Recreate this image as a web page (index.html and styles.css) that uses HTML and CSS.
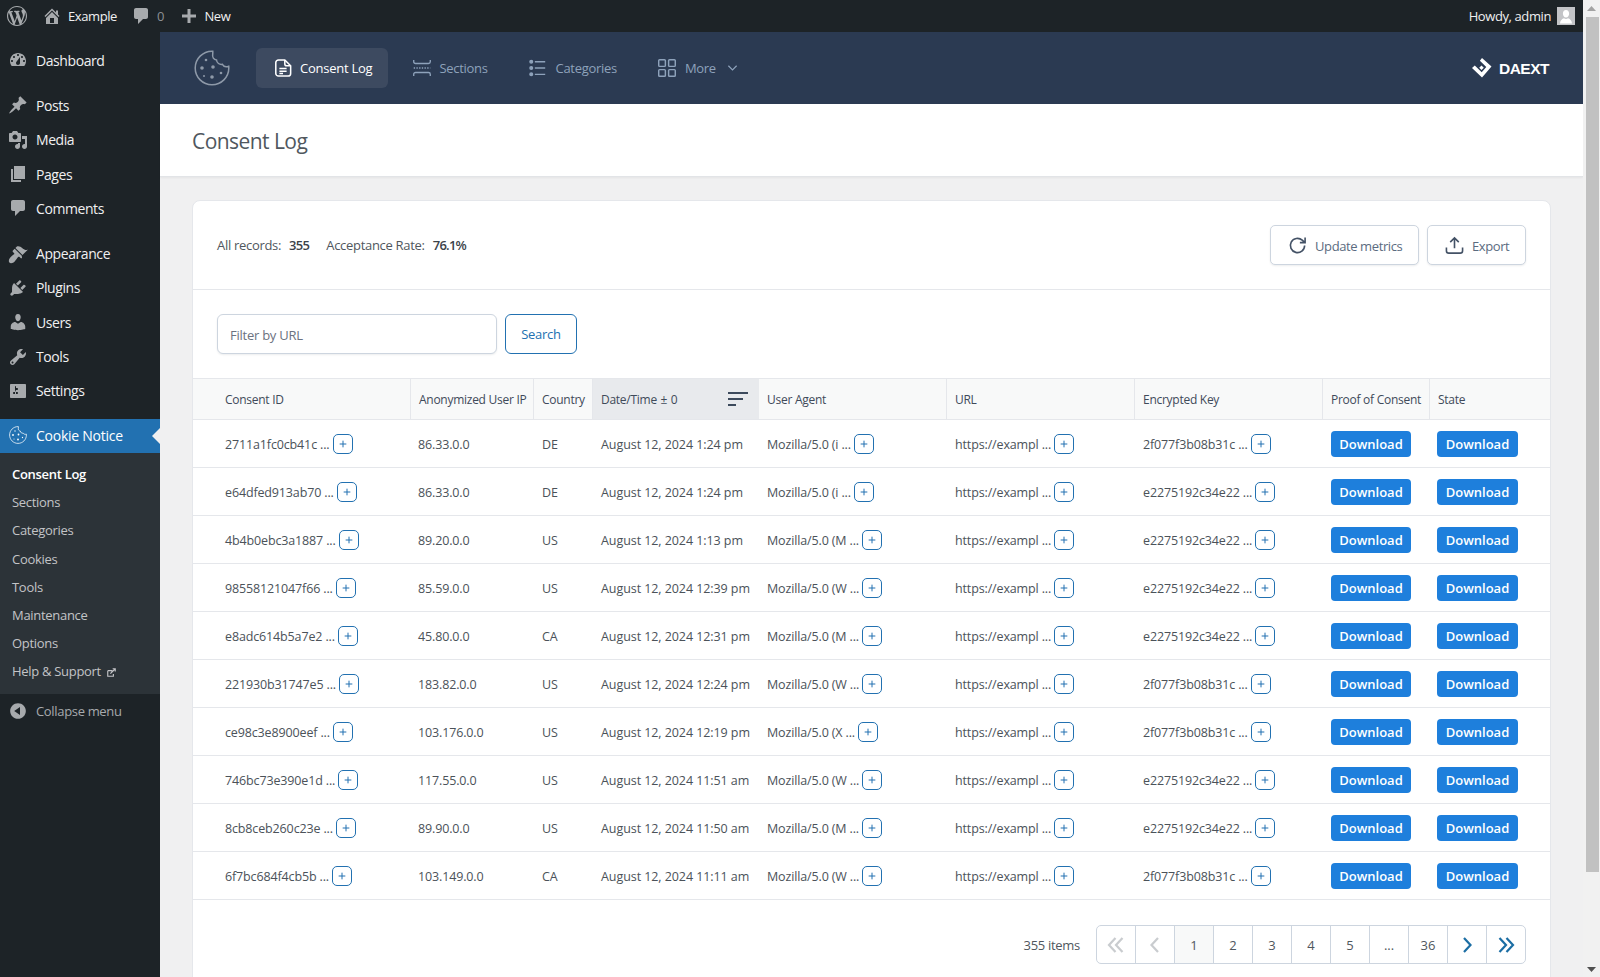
FILE: index.html
```html
<!DOCTYPE html>
<html lang="en">
<head>
<meta charset="utf-8">
<title>Consent Log</title>
<link rel="stylesheet" href="styles.css">
</head>
<body>
<svg class="defs" width="0" height="0" aria-hidden="true">
  <symbol id="i-cookie" viewBox="0 0 36 36"><path d="M18 1.200C8.700 1.200 1.200 8.700 1.200 18S8.700 34.800 18 34.800 34.800 27.300 34.800 18c0-.7 0-1.200-.1-1.800-2.400 1-5.100.3-6.300-1.900-2.900.6-5.600-1.300-5.900-4.300-2.700-.300-4.500-2.900-3.800-5.500.1-1.200.2-2.200.1-3.300z" fill="none" stroke="currentColor" stroke-width="1.500"/><circle cx="12" cy="10" r="1.300" fill="currentColor"/><circle cx="19" cy="17" r="1.800" fill="currentColor"/><circle cx="8" cy="18" r="1.800" fill="currentColor"/><circle cx="18" cy="27" r="1.800" fill="currentColor"/><circle cx="27" cy="23" r="1.300" fill="currentColor"/><circle cx="10" cy="26" r="1" fill="currentColor"/></symbol>
  <symbol id="i-plus" viewBox="0 0 18 18"><path d="M9 4v10M4 9h10" fill="none" stroke="currentColor" stroke-width="1.500"/></symbol>
  <symbol id="i-first" viewBox="0 0 20 20"><path d="M9.500 3 3 10l6.500 7M16.500 3 10 10l6.500 7" fill="none" stroke="currentColor" stroke-width="2.200"/></symbol>
  <symbol id="i-prev" viewBox="0 0 20 20"><path d="M13 3 6.500 10l6.500 7" fill="none" stroke="currentColor" stroke-width="2.200"/></symbol>
  <symbol id="i-next" viewBox="0 0 20 20"><path d="M7 3l6.500 7L7 17" fill="none" stroke="currentColor" stroke-width="2.200"/></symbol>
  <symbol id="i-last" viewBox="0 0 20 20"><path d="M3.500 3 10 10l-6.500 7M10.500 3 17 10l-6.500 7" fill="none" stroke="currentColor" stroke-width="2.200"/></symbol>
</svg>

<header class="adminbar">
  <div class="bar-group">
    <svg class="bar-wp" viewBox="0 0 20 20"><path fill-rule="evenodd" d="M20 10c0-5.510-4.490-10-10-10C4.480 0 0 4.490 0 10c0 5.520 4.480 10 10 10 5.510 0 10-4.480 10-10zM7.780 15.370L4.370 6.220c.55-.02 1.170-.08 1.170-.08.5-.06.44-1.130-.06-1.110 0 0-1.450.11-2.370.11-.18 0-.37 0-.58-.01C4.120 2.690 6.870 1.110 10 1.110c2.330 0 4.450.87 6.050 2.340-.68-.11-1.650.39-1.650 1.580 0 .74.45 1.360.9 2.100.35.61.55 1.360.55 2.460 0 1.490-1.400 5-1.400 5l-3.030-8.370c.54-.02.82-.17.82-.17.5-.05.44-1.250-.06-1.220 0 0-1.440.12-2.380.12-.87 0-2.330-.12-2.330-.12-.5-.03-.56 1.200-.06 1.220l.92.08 1.260 3.410zM17.410 10c.24-.64.74-1.870.43-4.250.7 1.290 1.050 2.710 1.050 4.250 0 3.290-1.730 6.240-4.400 7.780.97-2.590 1.940-5.200 2.920-7.780zM6.100 18.090C3.120 16.650 1.110 13.530 1.110 10c0-1.300.23-2.480.72-3.590C3.250 10.300 4.670 14.200 6.100 18.090zm4.030-6.630l2.580 6.980c-.86.29-1.760.45-2.710.45-.79 0-1.570-.11-2.290-.33.81-2.380 1.620-4.740 2.420-7.100z"/></svg>
    <svg class="bar-home" viewBox="0 0 20 20"><path d="M16 8.500l1.530 1.530-1.060 1.060L10 4.620l-6.470 6.470-1.060-1.060L10 2.500l4 4v-2h2v4zm-6-2.460l6 5.990V18H4v-5.970zM12 17v-5H8v5h4z"/></svg>
    <span class="bar-text bar-site">Example</span>
    <svg class="bar-comment" viewBox="0 0 20 20"><path d="M5 2h10c1.100 0 2 .9 2 2v7c0 1.100-.9 2-2 2h-3l-5 5v-5H5c-1.100 0-2-.9-2-2V4c0-1.100.9-2 2-2z"/></svg>
    <span class="bar-count">0</span>
    <svg class="bar-plus" viewBox="0 0 20 20"><path d="M17 8.500v3h-5.500V17h-3v-5.500H3v-3h5.500V3h3v5.500z"/></svg>
    <span class="bar-text">New</span>
  </div>
  <div class="bar-group">
    <span class="bar-text">Howdy, admin</span>
    <svg class="bar-avatar" viewBox="0 0 18 18"><rect width="18" height="18" fill="#c3c4c7"/><path fill="#fff" d="M9 3c2 0 3.100 1.600 3.100 3.500S11 10.500 9 10.500 5.900 8.400 5.900 6.500 7 3 9 3zM3 16.500c0-3 2.300-5 4-5.300.6.500 1.300.8 2 .8s1.400-.3 2-.8c1.700.3 4 2.300 4 5.300z"/></svg>
  </div>
</header>

<div class="frame">
  <nav class="sidebar">
    <ul class="menu">
      <li class="menu-item"><svg class="mi" viewBox="0 0 20 20"><path fill-rule="evenodd" d="M3.760 16h12.480c1.100-1.370 1.760-3.110 1.760-5 0-4.420-3.580-8-8-8s-8 3.580-8 8c0 1.890.66 3.630 1.760 5zM10 4c.55 0 1 .45 1 1s-.45 1-1 1-1-.45-1-1 .45-1 1-1zM6 6c.55 0 1 .45 1 1s-.45 1-1 1-1-.45-1-1 .45-1 1-1zm8 0c.55 0 1 .45 1 1s-.45 1-1 1-1-.45-1-1 .45-1 1-1zm-5.370 5.550L12 7v6c0 1.100-.9 2-2 2s-2-.9-2-2c0-.57.24-1.080.63-1.450zM4 10c.55 0 1 .45 1 1s-.45 1-1 1-1-.45-1-1 .45-1 1-1zm12 0c.55 0 1 .45 1 1s-.45 1-1 1-1-.45-1-1 .45-1 1-1z"/></svg>Dashboard</li>
      <li class="menu-sep"></li>
      <li class="menu-item"><svg class="mi" viewBox="0 0 20 20"><path d="M10.440 3.020l1.820-1.820 6.360 6.350-1.830 1.820c-1.050-.68-2.480-.57-3.410.36l-.75.75c-.92.93-1.040 2.350-.35 3.410l-1.830 1.820-2.410-2.410-2.800 2.790c-.42.42-3.380 2.710-3.800 2.290s1.860-3.390 2.280-3.810l2.790-2.790L4.100 9.360l1.830-1.820c1.050.69 2.480.57 3.400-.36l.75-.75c.93-.92 1.050-2.350.36-3.410z"/></svg>Posts</li>
      <li class="menu-item"><svg class="mi" viewBox="0 0 20 20"><path fill-rule="evenodd" d="M13 11V4c0-.55-.45-1-1-1h-1.670L9 1H5L3.670 3H2c-.55 0-1 .45-1 1v7c0 .55.45 1 1 1h10c.55 0 1-.45 1-1zM7 4.500c1.380 0 2.500 1.120 2.500 2.500S8.380 9.500 7 9.500 4.500 8.380 4.500 7 5.620 4.500 7 4.500zM14 6h5v10.500c0 1.380-1.120 2.500-2.500 2.500S14 17.880 14 16.500s1.120-2.500 2.500-2.500c.17 0 .34.02.5.05V9h-3V6zm-4 8.050V13h2v3.500c0 1.380-1.120 2.500-2.500 2.500S7 17.880 7 16.500 8.120 14 9.500 14c.17 0 .34.02.5.05z"/></svg>Media</li>
      <li class="menu-item"><svg class="mi" viewBox="0 0 20 20"><path d="M6 15V2h11v13H6zm-1 1h8v2H3V5h2v11z"/></svg>Pages</li>
      <li class="menu-item"><svg class="mi" viewBox="0 0 20 20"><path d="M5 2h10c1.100 0 2 .9 2 2v7c0 1.100-.9 2-2 2h-3l-5 5v-5H5c-1.100 0-2-.9-2-2V4c0-1.100.9-2 2-2z"/></svg>Comments</li>
      <li class="menu-sep"></li>
      <li class="menu-item"><svg class="mi" viewBox="0 0 20 20"><path d="M14.480 11.060L7.410 3.990l1.500-1.500c.5-.56 2.300-.47 3.510.32 1.210.8 1.430 1.280 2.910 2.100 1.180.64 2.450 1.260 4.450.85zm-.71.71L6.700 4.700 4.930 6.470c-.39.39-.39 1.020 0 1.410l1.060 1.060c.39.39.39 1.030 0 1.420-.6.6-1.430 1.110-2.210 1.690-.35.26-.7.53-1.010.84C1.430 13.710 0 17.200 1.440 18.560c1.440 1.440 4.860.03 6.140-2.400.31-.31.6-.63.86-.98.58-.77 1.090-1.600 1.690-2.200.39-.39 1.030-.39 1.420 0l1.060 1.060c.39.39 1.020.39 1.410 0z"/></svg>Appearance</li>
      <li class="menu-item"><svg class="mi" viewBox="0 0 20 20"><path d="M13.110 4.360L9.870 7.600 8 5.730l3.240-3.240c.35-.34 1.050-.2 1.560.32.52.51.66 1.210.31 1.550zm-8 1.770l.91-1.120 9.010 9.010-1.190.84c-.71.71-2.630 1.160-3.820 1.160H6.140L4.900 17.260c-.59.59-1.540.59-2.120 0-.59-.58-.59-1.530 0-2.120l1.240-1.240v-3.880c0-1.130.4-3.190 1.090-3.890zm7.260 3.970l3.240-3.240c.34-.35 1.040-.21 1.550.31.52.51.66 1.210.31 1.550l-3.240 3.250z"/></svg>Plugins</li>
      <li class="menu-item"><svg class="mi" viewBox="0 0 20 20"><path d="M10 9.250c-2.270 0-2.730-3.440-2.730-3.440C7 4.020 7.820 2 9.970 2c2.160 0 2.980 2.020 2.710 3.810 0 0-.41 3.440-2.680 3.440zm0 2.570L12.720 10c2.390 0 4.520 2.330 4.520 4.530v2.490s-3.650 1.130-7.240 1.130c-3.650 0-7.240-1.130-7.240-1.130v-2.490c0-2.250 1.940-4.480 4.470-4.480z"/></svg>Users</li>
      <li class="menu-item"><svg class="mi" viewBox="0 0 20 20"><path fill-rule="evenodd" d="M16.680 9.770c-1.340 1.340-3.300 1.670-4.950.99l-5.410 6.520c-.99.99-2.590.99-3.580 0s-.99-2.590 0-3.570l6.520-5.420c-.68-1.650-.35-3.610.99-4.950 1.280-1.280 3.120-1.620 4.720-1.060l-2.890 2.890 2.820 2.820 2.860-2.870c.53 1.580.18 3.390-1.080 4.650zM3.810 16.210c.4.39 1.040.39 1.430 0 .4-.4.4-1.040 0-1.430-.39-.4-1.030-.4-1.430 0-.39.39-.39 1.030 0 1.430z"/></svg>Tools</li>
      <li class="menu-item"><svg class="mi" viewBox="0 0 20 20"><path fill-rule="evenodd" d="M18 16V4c0-.55-.45-1-1-1H3c-.55 0-1 .45-1 1v12c0 .55.45 1 1 1h14c.55 0 1-.45 1-1zM8 11h1c.55 0 1 .45 1 1s-.45 1-1 1H8v1.500c0 .28-.22.5-.5.5s-.5-.22-.5-.5V13H6c-.55 0-1-.45-1-1s.45-1 1-1h1V5.500c0-.28.22-.5.5-.5s.5.22.5.5V7h1c.55 0 1 .45 1 1s-.45 1-1 1h-1v5.500c0 .28-.22.5-.5.5s-.5-.22-.5-.5V9z"/></svg>Settings</li>
      <li class="menu-sep menu-sep-last"></li>
      <li class="menu-item menu-active"><svg class="mi mi-cookie" viewBox="0 0 36 36"><use href="#i-cookie"/></svg>Cookie Notice</li>
    </ul>
    <ul class="submenu">
      <li class="sub-current">Consent Log</li>
      <li>Sections</li>
      <li>Categories</li>
      <li>Cookies</li>
      <li>Tools</li>
      <li>Maintenance</li>
      <li>Options</li>
      <li>Help &amp; Support <svg class="ext" viewBox="0 0 12 12"><path d="M1 3.500h5.500V6M1 3.500V11h7.500V8M4.500 7.500 11 1M7.500 1H11v3.500" fill="none" stroke="currentColor" stroke-width="1.500"/></svg></li>
    </ul>
    <div class="collapse"><svg class="mi" viewBox="0 0 20 20"><path fill-rule="evenodd" d="M10 2.160c4.330 0 7.840 3.510 7.840 7.840s-3.510 7.840-7.840 7.840S2.160 14.330 2.160 10 5.710 2.160 10 2.160zm2 11.720V6.120L6.180 9.970z"/></svg>Collapse menu</div>
  </nav>

  <div class="page">
    <div class="topnav">
      <div class="topnav-left">
        <svg class="brand-cookie" viewBox="0 0 36 36"><use href="#i-cookie"/></svg>
        <a class="tab tab-active"><svg class="tab-i" viewBox="0 0 20 20" fill="none" stroke="currentColor" stroke-width="1.700"><path d="M5 1h7l6.500 6.500V16a3 3 0 0 1-3 3H5a3 3 0 0 1-3-3V4a3 3 0 0 1 3-3z"/><path d="M12 1v4.500a2 2 0 0 0 2 2h4.500M6 10.500h8M6 13.500h8M6 16h4"/></svg>Consent Log</a>
        <a class="tab"><svg class="tab-i" viewBox="0 0 20 20" fill="none" stroke="currentColor" stroke-width="1.500"><path d="M.8 1v2a2 2 0 0 0 2 2h14.400a2 2 0 0 0 2-2V1M.8 19v-2a2 2 0 0 1 2-2h14.400a2 2 0 0 1 2 2v2"/><path d="M.8 10h18.400" stroke-dasharray="1.500 1.500"/></svg>Sections</a>
        <a class="tab"><svg class="tab-i" viewBox="0 0 20 20" fill="none" stroke="currentColor" stroke-width="1.500"><path d="M6.500 3H18M6.500 10H18M6.500 17H18"/><circle cx="2.500" cy="3" r="1.500" fill="currentColor"/><circle cx="2.500" cy="10" r="1.500" fill="currentColor"/><circle cx="2.500" cy="17" r="1.500" fill="currentColor"/></svg>Categories</a>
        <a class="tab tab-more"><svg class="tab-i" viewBox="0 0 20 20" fill="none" stroke="currentColor" stroke-width="1.600"><rect x=".8" y=".8" width="7.400" height="7.400" rx="1"/><rect x="11.800" y=".8" width="7.400" height="7.400" rx="1"/><rect x=".8" y="11.800" width="7.400" height="7.400" rx="1"/><rect x="11.800" y="11.800" width="7.400" height="7.400" rx="1"/></svg>More<svg class="chev" viewBox="0 0 12 8" fill="none" stroke="currentColor" stroke-width="1.300"><path d="M1.500 1.500 6 6l4.500-4.500"/></svg></a>
      </div>
      <div class="daext"><svg class="daext-logo" viewBox="0 0 20 20"><path fill="#fff" d="M10 0l9.500 8.500-9.500 11L0 10l2.800-2.600 6.900 6.800 4.600-5.300-6.400-6.200zM9.500 7.500l2.300 2.300-2.300 2.300-2.300-2.300z"/></svg><span>DAEXT</span></div>
    </div>

    <div class="titlebar"><h1>Consent Log</h1></div>

    <main class="content">
      <section class="card">
        <div class="stats">
          <div class="stat-list">
            <span>All records:</span><b>355</b>
            <span class="stat-second">Acceptance Rate:</span><b>76.1%</b>
          </div>
          <div class="actions">
            <button class="btn-light btn-update"><svg viewBox="0 0 20 20" fill="none" stroke="currentColor" stroke-width="1.700"><path d="M17.500 10A7.500 7.500 0 1 1 15 4.400L17.800 7M18 1.500V7h-5.500"/></svg>Update metrics</button>
            <button class="btn-light btn-export"><svg viewBox="0 0 20 20" fill="none" stroke="currentColor" stroke-width="1.700"><path d="M1.500 12v3.500a2.500 2.500 0 0 0 2.500 2.500h12a2.500 2.500 0 0 0 2.500-2.500V12M10 13V2M5.500 6.500 10 2l4.500 4.500"/></svg>Export</button>
          </div>
        </div>

        <form class="filter">
          <input class="filter-input" type="text" placeholder="Filter by URL">
          <button class="btn-search" type="button">Search</button>
        </form>

        <table class="log">
          <colgroup>
            <col class="c-id"><col class="c-ip"><col class="c-country"><col class="c-date"><col class="c-ua"><col class="c-url"><col class="c-key"><col class="c-proof"><col class="c-state">
          </colgroup>
          <thead>
            <tr>
              <th class="first">Consent ID</th>
              <th>Anonymized User IP</th>
              <th>Country</th>
              <th class="sorted"><div class="sort-cell">Date/Time ± 0<svg class="sort-i" viewBox="0 0 20 14"><path d="M0 1h20M0 7h15M0 13h8" stroke="#3c4a5c" stroke-width="2"/></svg></div></th>
              <th>User Agent</th>
              <th>URL</th>
              <th>Encrypted Key</th>
              <th>Proof of Consent</th>
              <th class="last">State</th>
            </tr>
          </thead>
          <tbody>
            <tr><td class="first has-more">2711a1fc0cb41c ...<button class="more"><svg viewBox="0 0 18 18"><use href="#i-plus"/></svg></button></td><td>86.33.0.0</td><td>DE</td><td>August 12, 2024 1:24 pm</td><td class="has-more">Mozilla/5.0 (i ...<button class="more"><svg viewBox="0 0 18 18"><use href="#i-plus"/></svg></button></td><td class="has-more">https://exampl ...<button class="more"><svg viewBox="0 0 18 18"><use href="#i-plus"/></svg></button></td><td class="has-more">2f077f3b08b31c ...<button class="more"><svg viewBox="0 0 18 18"><use href="#i-plus"/></svg></button></td><td><button class="dl">Download</button></td><td><button class="dl">Download</button></td></tr>
            <tr><td class="first has-more">e64dfed913ab70 ...<button class="more"><svg viewBox="0 0 18 18"><use href="#i-plus"/></svg></button></td><td>86.33.0.0</td><td>DE</td><td>August 12, 2024 1:24 pm</td><td class="has-more">Mozilla/5.0 (i ...<button class="more"><svg viewBox="0 0 18 18"><use href="#i-plus"/></svg></button></td><td class="has-more">https://exampl ...<button class="more"><svg viewBox="0 0 18 18"><use href="#i-plus"/></svg></button></td><td class="has-more">e2275192c34e22 ...<button class="more"><svg viewBox="0 0 18 18"><use href="#i-plus"/></svg></button></td><td><button class="dl">Download</button></td><td><button class="dl">Download</button></td></tr>
            <tr><td class="first has-more">4b4b0ebc3a1887 ...<button class="more"><svg viewBox="0 0 18 18"><use href="#i-plus"/></svg></button></td><td>89.20.0.0</td><td>US</td><td>August 12, 2024 1:13 pm</td><td class="has-more">Mozilla/5.0 (M ...<button class="more"><svg viewBox="0 0 18 18"><use href="#i-plus"/></svg></button></td><td class="has-more">https://exampl ...<button class="more"><svg viewBox="0 0 18 18"><use href="#i-plus"/></svg></button></td><td class="has-more">e2275192c34e22 ...<button class="more"><svg viewBox="0 0 18 18"><use href="#i-plus"/></svg></button></td><td><button class="dl">Download</button></td><td><button class="dl">Download</button></td></tr>
            <tr><td class="first has-more">98558121047f66 ...<button class="more"><svg viewBox="0 0 18 18"><use href="#i-plus"/></svg></button></td><td>85.59.0.0</td><td>US</td><td>August 12, 2024 12:39 pm</td><td class="has-more">Mozilla/5.0 (W ...<button class="more"><svg viewBox="0 0 18 18"><use href="#i-plus"/></svg></button></td><td class="has-more">https://exampl ...<button class="more"><svg viewBox="0 0 18 18"><use href="#i-plus"/></svg></button></td><td class="has-more">e2275192c34e22 ...<button class="more"><svg viewBox="0 0 18 18"><use href="#i-plus"/></svg></button></td><td><button class="dl">Download</button></td><td><button class="dl">Download</button></td></tr>
            <tr><td class="first has-more">e8adc614b5a7e2 ...<button class="more"><svg viewBox="0 0 18 18"><use href="#i-plus"/></svg></button></td><td>45.80.0.0</td><td>CA</td><td>August 12, 2024 12:31 pm</td><td class="has-more">Mozilla/5.0 (M ...<button class="more"><svg viewBox="0 0 18 18"><use href="#i-plus"/></svg></button></td><td class="has-more">https://exampl ...<button class="more"><svg viewBox="0 0 18 18"><use href="#i-plus"/></svg></button></td><td class="has-more">e2275192c34e22 ...<button class="more"><svg viewBox="0 0 18 18"><use href="#i-plus"/></svg></button></td><td><button class="dl">Download</button></td><td><button class="dl">Download</button></td></tr>
            <tr><td class="first has-more">221930b31747e5 ...<button class="more"><svg viewBox="0 0 18 18"><use href="#i-plus"/></svg></button></td><td>183.82.0.0</td><td>US</td><td>August 12, 2024 12:24 pm</td><td class="has-more">Mozilla/5.0 (W ...<button class="more"><svg viewBox="0 0 18 18"><use href="#i-plus"/></svg></button></td><td class="has-more">https://exampl ...<button class="more"><svg viewBox="0 0 18 18"><use href="#i-plus"/></svg></button></td><td class="has-more">2f077f3b08b31c ...<button class="more"><svg viewBox="0 0 18 18"><use href="#i-plus"/></svg></button></td><td><button class="dl">Download</button></td><td><button class="dl">Download</button></td></tr>
            <tr><td class="first has-more">ce98c3e8900eef ...<button class="more"><svg viewBox="0 0 18 18"><use href="#i-plus"/></svg></button></td><td>103.176.0.0</td><td>US</td><td>August 12, 2024 12:19 pm</td><td class="has-more">Mozilla/5.0 (X ...<button class="more"><svg viewBox="0 0 18 18"><use href="#i-plus"/></svg></button></td><td class="has-more">https://exampl ...<button class="more"><svg viewBox="0 0 18 18"><use href="#i-plus"/></svg></button></td><td class="has-more">2f077f3b08b31c ...<button class="more"><svg viewBox="0 0 18 18"><use href="#i-plus"/></svg></button></td><td><button class="dl">Download</button></td><td><button class="dl">Download</button></td></tr>
            <tr><td class="first has-more">746bc73e390e1d ...<button class="more"><svg viewBox="0 0 18 18"><use href="#i-plus"/></svg></button></td><td>117.55.0.0</td><td>US</td><td>August 12, 2024 11:51 am</td><td class="has-more">Mozilla/5.0 (W ...<button class="more"><svg viewBox="0 0 18 18"><use href="#i-plus"/></svg></button></td><td class="has-more">https://exampl ...<button class="more"><svg viewBox="0 0 18 18"><use href="#i-plus"/></svg></button></td><td class="has-more">e2275192c34e22 ...<button class="more"><svg viewBox="0 0 18 18"><use href="#i-plus"/></svg></button></td><td><button class="dl">Download</button></td><td><button class="dl">Download</button></td></tr>
            <tr><td class="first has-more">8cb8ceb260c23e ...<button class="more"><svg viewBox="0 0 18 18"><use href="#i-plus"/></svg></button></td><td>89.90.0.0</td><td>US</td><td>August 12, 2024 11:50 am</td><td class="has-more">Mozilla/5.0 (M ...<button class="more"><svg viewBox="0 0 18 18"><use href="#i-plus"/></svg></button></td><td class="has-more">https://exampl ...<button class="more"><svg viewBox="0 0 18 18"><use href="#i-plus"/></svg></button></td><td class="has-more">e2275192c34e22 ...<button class="more"><svg viewBox="0 0 18 18"><use href="#i-plus"/></svg></button></td><td><button class="dl">Download</button></td><td><button class="dl">Download</button></td></tr>
            <tr><td class="first has-more">6f7bc684f4cb5b ...<button class="more"><svg viewBox="0 0 18 18"><use href="#i-plus"/></svg></button></td><td>103.149.0.0</td><td>CA</td><td>August 12, 2024 11:11 am</td><td class="has-more">Mozilla/5.0 (W ...<button class="more"><svg viewBox="0 0 18 18"><use href="#i-plus"/></svg></button></td><td class="has-more">https://exampl ...<button class="more"><svg viewBox="0 0 18 18"><use href="#i-plus"/></svg></button></td><td class="has-more">2f077f3b08b31c ...<button class="more"><svg viewBox="0 0 18 18"><use href="#i-plus"/></svg></button></td><td><button class="dl">Download</button></td><td><button class="dl">Download</button></td></tr>
          </tbody>
        </table>

        <div class="pager">
          <span class="pager-count">355 items</span>
          <div class="pager-links">
            <a class="pg pg-off"><svg viewBox="0 0 20 20"><use href="#i-first"/></svg></a>
            <a class="pg pg-off"><svg viewBox="0 0 20 20"><use href="#i-prev"/></svg></a>
            <a class="pg pg-current">1</a>
            <a class="pg">2</a>
            <a class="pg">3</a>
            <a class="pg">4</a>
            <a class="pg">5</a>
            <a class="pg">...</a>
            <a class="pg">36</a>
            <a class="pg pg-nav"><svg viewBox="0 0 20 20"><use href="#i-next"/></svg></a>
            <a class="pg pg-nav"><svg viewBox="0 0 20 20"><use href="#i-last"/></svg></a>
          </div>
        </div>
      </section>
    </main>
  </div>
</div>

<div class="scrollbar">
  <svg class="sb-arrow" viewBox="0 0 9 5"><path d="M4.500 0 9 5H0z"/></svg>
  <div class="sb-thumb"></div>
  <svg class="sb-arrow sb-down" viewBox="0 0 9 5"><path d="M0 0h9L4.500 5z"/></svg>
</div>
</body>
</html>
```

FILE: styles.css
```css
* { box-sizing: border-box; }
html, body { margin: 0; padding: 0; height: 977px; overflow: hidden; }
body {
  position: relative;
  font-family: "Open Sans", "Noto Sans", sans-serif;
  font-size: 13px;
  color: #3c434a;
  background: #f0f0f1;
  width: 1600px;
  display: grid;
  grid-template-columns: 1583px 17px;
  grid-template-rows: 32px 945px;
}
.defs { position: absolute; }
ul { list-style: none; margin: 0; padding: 0; }

/* Admin bar */
.adminbar {
  grid-column: 1;
  grid-row: 1;
  background: #1d2327;
  color: #f0f0f1;
  display: flex;
  justify-content: space-between;
  align-items: center;
  padding: 0 8px 0 7px;
}
.bar-group { display: flex; align-items: center; }
.bar-text { letter-spacing: -.4px; }
.adminbar svg { fill: #a7aaad; }
.bar-wp { width: 20px; height: 20px; }
.bar-home { width: 20px; height: 20px; margin-left: 15px; margin-right: 6px; }
.bar-comment { width: 20px; height: 20px; margin-left: 14px; }
.bar-count { color: #8c8f94; margin-left: 6px; }
.bar-plus { width: 20px; height: 20px; margin-left: 15px; margin-right: 5px; }
.bar-avatar { width: 18px; height: 18px; margin-left: 6px; }

/* Frame */
.frame { grid-column: 1; grid-row: 2; display: flex; min-height: 0; }

/* Sidebar */
.sidebar { width: 160px; flex: none; background: #1d2327; padding-top: 12px; color: #f0f0f1; }
.menu-item {
  height: 34.3px;
  display: flex;
  align-items: center;
  font-size: 14px;
  letter-spacing: -.42px;
  padding: 0 0 2px 8px;
}
.mi { width: 20px; height: 20px; fill: #a7aaad; margin-right: 8px; flex: none; }
.menu-sep { height: 11px; }
.menu-sep-last { height: 10px; }
.menu-active { background: #2271b1; color: #fff; position: relative; letter-spacing: -.25px; }
.menu-active::after {
  content: "";
  position: absolute;
  right: 0;
  top: 9px;
  border: 8px solid transparent;
  border-right-color: #f0f0f1;
  border-left-width: 0;
}
.mi-cookie { color: #fff; fill: none; width: 18px; height: 18px; margin: 0 9px 0 1px; }
.submenu { background: #2c3338; padding: 8px 0; color: #c3c4c7; font-size: 13px; letter-spacing: -.3px; }
.submenu li { height: 28.1px; line-height: 26px; padding-left: 12px; }
.sub-current { color: #fff; font-weight: 600; }
.ext { width: 9px; height: 9px; margin-left: 3px; vertical-align: -1px; }
.collapse { display: flex; align-items: center; height: 36px; padding: 0 0 2px 8px; color: #a7aaad; letter-spacing: -.33px; }

/* Page */
.page { flex: 1; min-width: 0; display: flex; flex-direction: column; }
.topnav {
  height: 72px;
  flex: none;
  background: #2b3a52;
  display: flex;
  justify-content: space-between;
  align-items: center;
  padding: 0 34px 0 34px;
}
.topnav-left { display: flex; align-items: center; }
.brand-cookie { width: 36px; height: 36px; color: #8e99a8; margin-right: 26px; }
.tab {
  display: flex;
  align-items: center;
  height: 40px;
  padding: 0 16px 0 18px;
  margin-right: 7px;
  border-radius: 6px;
  color: #8ea2bb;
  letter-spacing: -.3px;
  white-space: nowrap;
}
.tab-active { background: #3d4a60; color: #fff; letter-spacing: -.25px; }
.tab-i { width: 18px; height: 18px; margin-right: 8px; flex: none; }
.tab:nth-child(n+4) .tab-i { margin-right: 9px; }
.chev { width: 11px; height: 8px; margin-left: 11px; }
.daext { display: flex; align-items: center; color: #fff; font-family: "Liberation Sans", sans-serif; font-weight: 700; font-size: 15.5px; letter-spacing: -.5px; padding-top: 1px; }
.daext-logo { width: 20px; height: 20px; margin-right: 7px; margin-top: -1px; }

.titlebar {
  height: 73px;
  flex: none;
  background: #fff;
  border-bottom: 1px solid #e2e4e7;
  box-shadow: 0 1px 2px rgba(0,0,0,.05);
  padding: 2px 0 0 32px;
  display: flex;
  align-items: center;
}
.titlebar h1 { margin: 0; font-size: 21px; font-weight: 400; color: #50575e; letter-spacing: -.55px; }

.content { flex: 1; min-height: 0; padding: 23px 32px 0; overflow: hidden; }
.card { background: #fff; border: 1px solid #e5e7eb; border-radius: 8px; }

.stats {
  height: 89px;
  border-bottom: 1px solid #e5e7eb;
  padding: 24px;
  display: flex;
  justify-content: space-between;
  align-items: center;
}
.stat-list { color: #50575e; letter-spacing: -.3px; }
.stat-list b { font-weight: 600; margin-left: 8px; color: #3c434a; letter-spacing: -.75px; }
.stat-second { margin-left: 14px; }
.actions { display: flex; gap: 8px; }
.btn-light {
  height: 40px;
  display: flex;
  align-items: center;
  background: #fff;
  border: 1px solid #cdd5df;
  border-radius: 5px;
  box-shadow: 0 1px 2px rgba(16,24,40,.08);
  color: #5b6b80;
  font: inherit;
  letter-spacing: -.4px;
  padding: 1px 0 0;
}
.btn-update { width: 149px; padding-left: 17px; }
.btn-export { width: 99px; padding-left: 17px; }
.btn-light svg { width: 19px; height: 19px; margin: -1px 8px 0 0; color: #445266; }

.filter { height: 88px; padding: 24px; display: flex; gap: 8px; }
.filter-input {
  width: 280px;
  height: 40px;
  border: 1px solid #cdd5df;
  border-radius: 6px;
  box-shadow: 0 1px 2px rgba(16,24,40,.08);
  padding: 2px 12px 0;
  font: inherit;
  letter-spacing: -.25px;
  color: #50575e;
}
.filter-input::placeholder { color: #6b7280; }
.btn-search {
  width: 72px;
  height: 40px;
  background: #fff;
  border: 1px solid #2271b1;
  border-radius: 6px;
  color: #2271b1;
  font: inherit;
  letter-spacing: -.25px;
  padding: 0;
}

/* Table */
.log { table-layout: fixed; width: 1357px; border-collapse: separate; border-spacing: 0; }
.c-id { width: 218px; }
.c-ip { width: 123px; }
.c-country { width: 59px; }
.c-date { width: 166px; }
.c-ua { width: 188px; }
.c-url { width: 188px; }
.c-key { width: 188px; }
.c-proof { width: 107px; }
.c-state { width: 120px; }
.log th {
  height: 42px;
  background: #f8f9f9;
  border-top: 1px solid #e5e7eb;
  border-bottom: 1px solid #e5e7eb;
  border-right: 1px solid #e5e7eb;
  font-weight: 400;
  font-size: 12px;
  text-align: left;
  color: #3f4a5a;
  padding: 0 0 0 8px;
  white-space: nowrap;
  letter-spacing: -.27px;
}
.log th.last { border-right: 0; }
.log th.first, .log td.first { padding-left: 32px; }
.log th.sorted { background: #e8eaed; border-right: 0; word-spacing: .8px; }
.sort-cell { display: flex; align-items: center; justify-content: space-between; padding-right: 11px; }
.sort-i { width: 20px; height: 14px; }
.log td {
  height: 48px;
  border-bottom: 1px solid #e5e7eb;
  padding: 2px 0 0 8px;
  white-space: nowrap;
  color: #4b5259;
  font-size: 12.5px;
  letter-spacing: -.14px;
}
.log td.has-more { padding-top: 0; }
.log td:nth-child(2) { padding-left: 7px; }
.log td:nth-child(4) { letter-spacing: -.07px; }
.log td:last-child { padding-left: 7px; }
.more {
  display: inline-flex;
  align-items: center;
  justify-content: center;
  vertical-align: -1px;
  width: 20px;
  height: 20px;
  margin-left: 3px;
  padding: 0;
  background: #fff;
  border: 1px solid #2271b1;
  border-radius: 5px;
  color: #2271b1;
}
.more svg { width: 12px; height: 12px; }
.dl {
  width: 80px;
  height: 26px;
  margin-bottom: 2px;
  background: #1e7fdc;
  border: 0;
  border-radius: 4px;
  color: #fff;
  font: 600 13px "Open Sans", sans-serif;
  letter-spacing: 0;
  padding: 0;
}
.log td:last-child .dl { width: 81px; }

/* Pager */
.pager { display: flex; justify-content: flex-end; align-items: center; padding: 25px 24px 24px; gap: 16px; }
.pager-count { color: #50575e; letter-spacing: -.3px; }
.pager-links { display: flex; border: 1px solid #cdd5df; border-radius: 5px; overflow: hidden; height: 39px; width: 430px; }
.pg {
  flex: 1;
  display: flex;
  align-items: center;
  justify-content: center;
  color: #50575e;
  border-right: 1px solid #cdd5df;
}
.pg:last-child { border-right: 0; }
.pg svg { width: 20px; height: 20px; }
.pg-off { color: #c9cccf; }
.pg-current { background: #f8f9f9; }
.pg-nav { color: #1c6ea4; }

/* Scrollbar */
.scrollbar {
  grid-column: 2;
  grid-row: 1 / span 2;
  background: #f1f1f1;
  display: flex;
  flex-direction: column;
  align-items: center;
  position: relative;
}
.sb-arrow { width: 9px; height: 5px; fill: #a3a3a3; margin: 6px 0; flex: none; }
.sb-thumb { width: 13px; height: 855px; margin-left: 1px; background: #c1c1c1; flex: none; margin-bottom: 95px; }
.sb-down { fill: #505050; margin: 0; }
```
